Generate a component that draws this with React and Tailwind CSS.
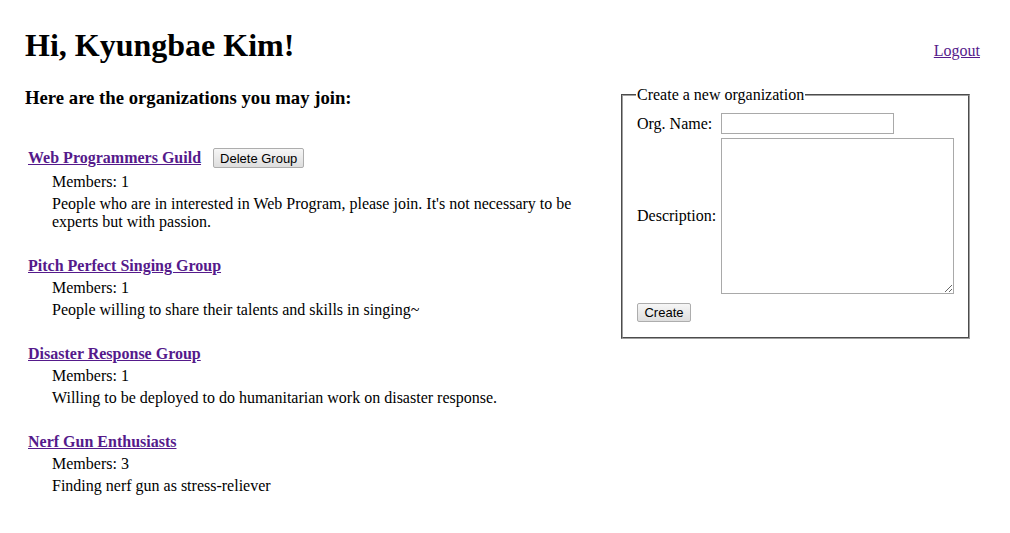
import React from 'react';

const groups = [
  {
    name: 'Web Programmers Guild',
    members: 1,
    description:
      "People who are in interested in Web Program, please join. It's not necessary to be experts but with passion.",
    canDelete: true,
  },
  {
    name: 'Pitch Perfect Singing Group',
    members: 1,
    description: 'People willing to share their talents and skills in singing~',
  },
  {
    name: 'Disaster Response Group',
    members: 1,
    description: 'Willing to be deployed to do humanitarian work on disaster response.',
  },
  {
    name: 'Nerf Gun Enthusiasts',
    members: 3,
    description: 'Finding nerf gun as stress-reliever',
  },
];

const btn =
  'rounded-[2px] border border-[#adadad] bg-gradient-to-b from-[#f6f6f6] to-[#dedede] px-[6px] font-["Liberation_Sans",Arial,sans-serif] text-[13px] leading-none text-black';

const GroupItem = ({ group }) => (
  <div className="mb-[26px]">
    <div className={`flex items-center gap-[12px] ${group.canDelete ? 'h-[22px]' : 'h-[18px]'}`}>
      <a href="#" className="text-[16px] font-bold leading-[18px] text-[#551a8b] underline">
        {group.name}
      </a>
      {group.canDelete && <button className={`${btn} h-[20px]`}>Delete Group</button>}
    </div>
    <div className="mt-[4px] pl-[24px] leading-[18px]">Members: {group.members}</div>
    <div className="mt-[4px] pl-[24px] leading-[18px]">{group.description}</div>
  </div>
);

export default function App() {
  return (
    <div className='min-h-screen bg-white px-[25px] font-["Liberation_Serif","Times_New_Roman",serif] text-[16px] text-black'>
      <div className="flex items-baseline justify-between pt-[27px] pr-[5px]">
        <h1 className="text-[32px] font-bold leading-[37px]">Hi, Kyungbae Kim!</h1>
        <a href="#" className="text-[16px] text-[#551a8b] underline">
          Logout
        </a>
      </div>

      <div className="flex items-start">
        <div className="w-[571px]">
          <h3 className="mt-[23px] text-[18.72px] font-bold leading-[22px]">
            Here are the organizations you may join:
          </h3>
          <div className="mt-[38px] pl-[3px]">
            {groups.map((g) => (
              <GroupItem key={g.name} group={g} />
            ))}
          </div>
        </div>

        <fieldset className="mt-[22px] ml-[25px] w-[349px] border-2 border-[#a0a0a0] px-[14px] pt-[9px] pb-[13px] [border-style:groove]">
          <legend className="ml-[-1px] px-[1px] leading-[18px]">Create a new organization</legend>
          <div className="grid grid-cols-[84px_auto] grid-rows-[21px_156px] gap-y-[4px]">
            <label className="flex items-center leading-[18px]">Org. Name:</label>
            <input
              type="text"
              className="block h-[21px] w-[173px] border border-[#a9a9a9] bg-white"
            />
            <label className="flex items-center leading-[18px]">Description:</label>
            <textarea className="block h-[156px] w-[233px] resize border border-[#a9a9a9] bg-white" />
          </div>
          <button className={`${btn} mt-[9px] h-[19px] w-[54px]`}>Create</button>
        </fieldset>
      </div>
    </div>
  );
}
